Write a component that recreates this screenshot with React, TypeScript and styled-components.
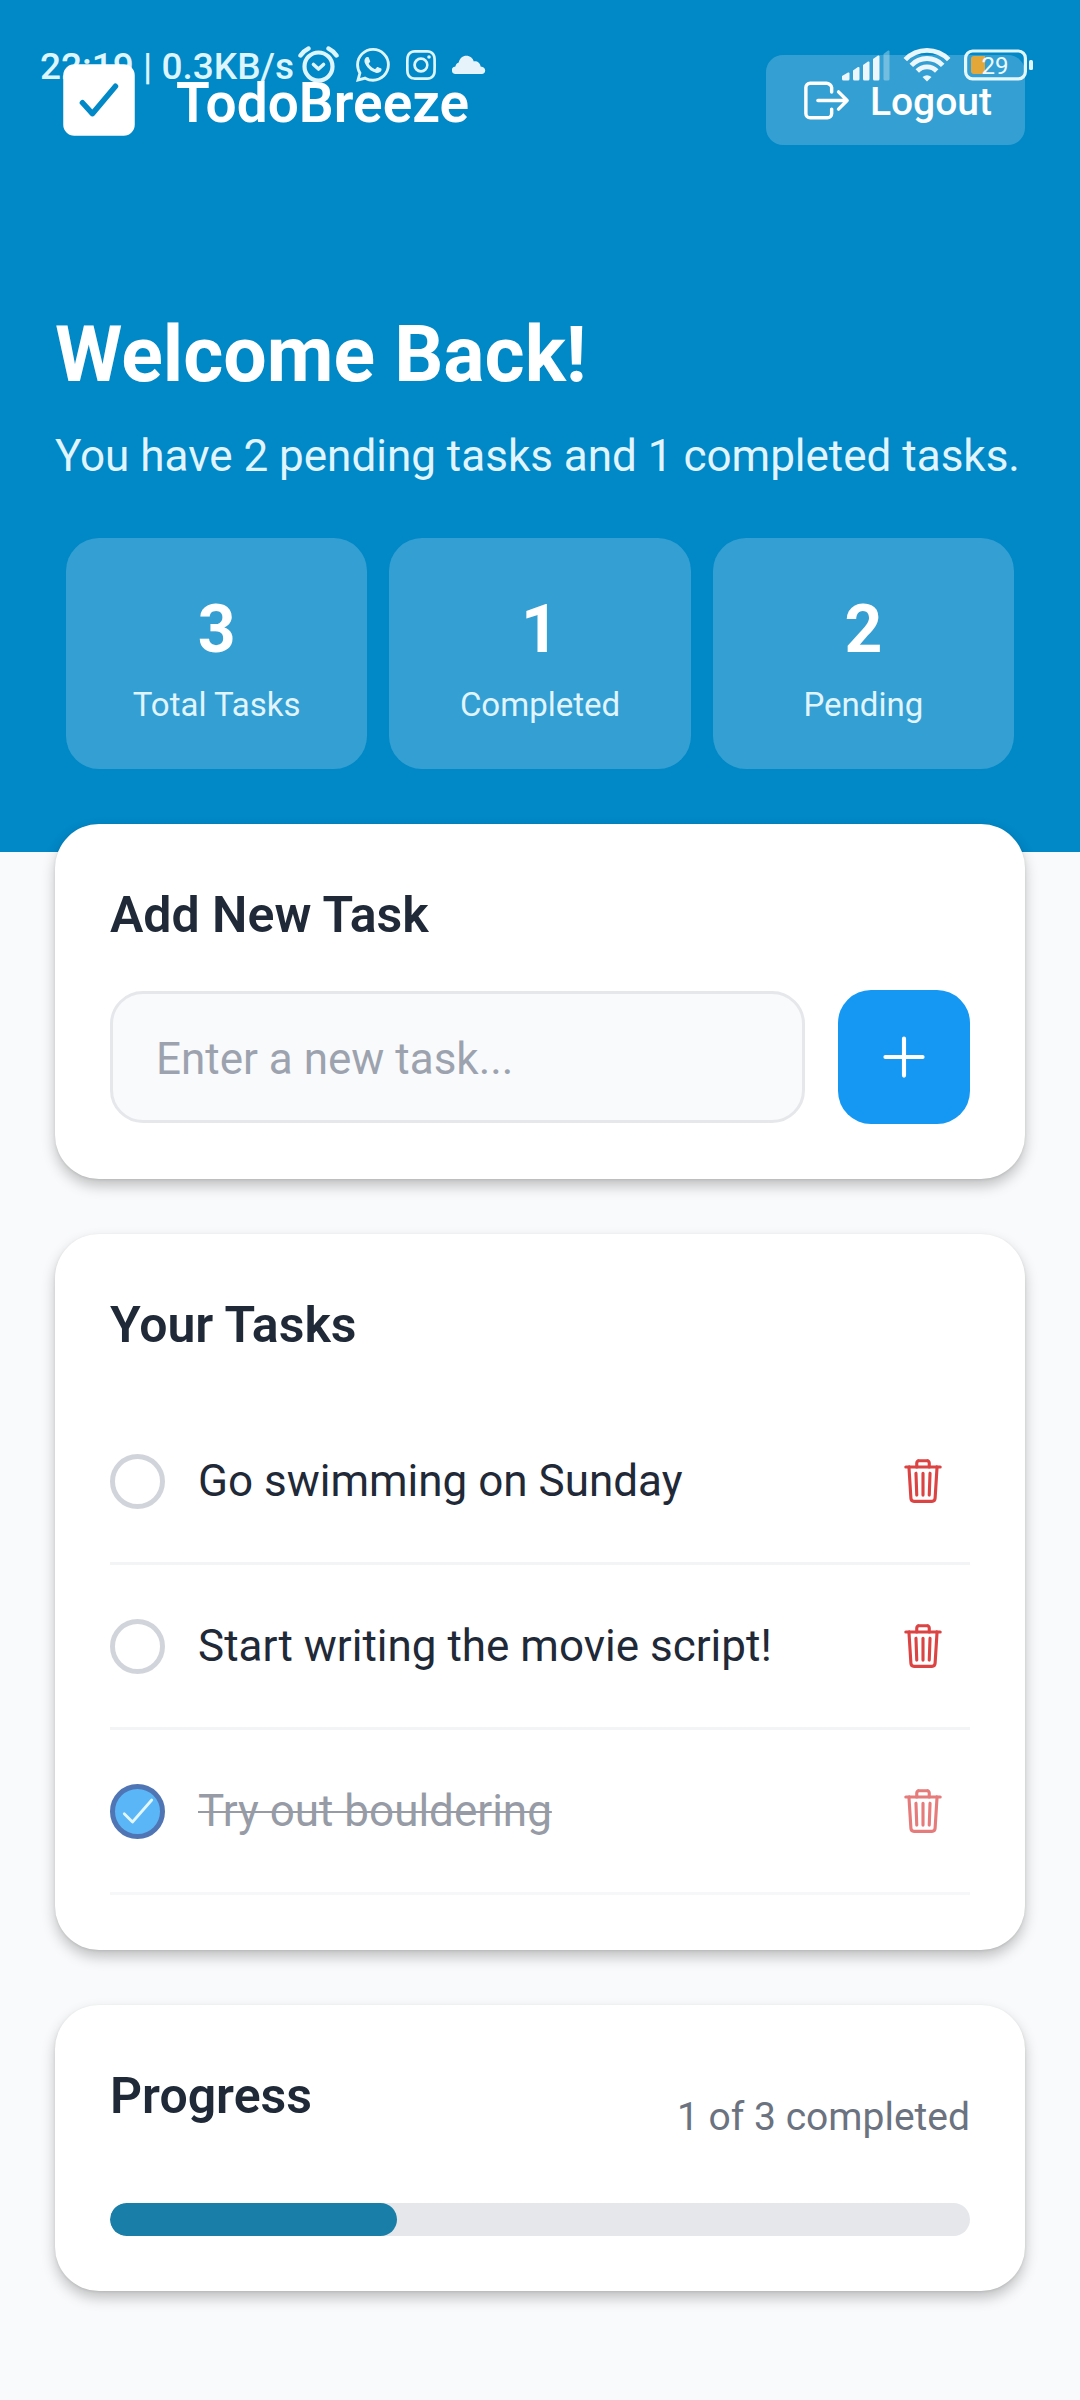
import React, { useState } from "react";
import styled, { createGlobalStyle } from "styled-components";
import {
  IoAddOutline,
  IoCheckbox,
  IoCheckmarkOutline,
  IoLogOutOutline,
  IoTrashOutline,
} from "react-icons/io5";
import { BsInstagram, BsWhatsapp } from "react-icons/bs";

const GlobalStyle = createGlobalStyle`
  *, *::before, *::after { box-sizing: border-box; }
  body {
    margin: 0;
    background: #f9fafb;
    color: #1f2937;
    font-family: Roboto, "Noto Sans", sans-serif;
  }
  h1, h2, p, ul, dl, dt, dd { margin: 0; padding: 0; }
  button, input { font: inherit; }
  svg { display: block; flex: none; }
`;

const Page = styled.div`
  position: relative;
  min-height: 100vh;
`;

const StatusBar = styled.div`
  position: absolute;
  z-index: 1;
  inset: 0 0 auto;
  height: 130px;
  padding: 0 46px 0 40px;
  display: flex;
  align-items: center;
  justify-content: space-between;
  color: #dcf5fe;
  pointer-events: none;
`;

const StatusGroup = styled.div<{ $gap: number }>`
  display: flex;
  align-items: center;
  gap: ${(p) => p.$gap}px;
`;

const StatusText = styled.span`
  padding-top: 3px;
  font-size: 37px;
  line-height: 48px;
  font-weight: 500;
  white-space: nowrap;
`;

const Header = styled.header`
  background: #0088c7;
  padding: 55px 55px 83px;
`;

const TopRow = styled.div`
  position: relative;
  z-index: 2;
  display: flex;
  align-items: center;
  justify-content: space-between;
`;

const Brand = styled.div`
  display: flex;
  align-items: center;
  gap: 33px;
  color: #fff;
`;

const BrandName = styled.span`
  padding-top: 5px;
  font-size: 55px;
  line-height: 78px;
  font-weight: 600;
`;

const LogoutButton = styled.button`
  display: flex;
  align-items: center;
  gap: 16px;
  height: 90px;
  padding: 0 33px;
  border: 0;
  border-radius: 17px;
  background: rgba(255, 255, 255, 0.2);
  color: #fff;
  font-size: 39px;
  line-height: 54px;
  font-weight: 500;
  cursor: pointer;
`;

const LogoutText = styled.span`
  padding-top: 3px;
`;

const Welcome = styled.h1`
  margin-top: 155px;
  color: #fff;
  font-size: 77px;
  line-height: 110px;
  font-weight: 700;
`;

const Summary = styled.p`
  margin-top: 15px;
  color: #e0f5ff;
  font-size: 44px;
  line-height: 63px;
`;

const Stats = styled.dl`
  margin: 50px 11px 0;
  display: grid;
  grid-template-columns: repeat(3, 1fr);
  gap: 22px;
`;

const StatCard = styled.div`
  display: flex;
  flex-direction: column-reverse;
  gap: 4px;
  padding: 45px 33px 41px;
  border-radius: 33px;
  background: rgba(255, 255, 255, 0.2);
  text-align: center;
`;

const StatValue = styled.dd`
  color: #fff;
  font-size: 66px;
  line-height: 94px;
  font-weight: 700;
`;

const StatLabel = styled.dt`
  color: #e0f5ff;
  font-size: 33px;
  line-height: 47px;
`;

const Content = styled.main`
  position: relative;
  margin-top: -28px;
  padding: 0 55px 55px;
  display: flex;
  flex-direction: column;
  gap: 55px;
`;

const Card = styled.section`
  padding: 55px;
  border-radius: 44px;
  background: #fff;
  box-shadow: 0 7px 14px rgba(0, 0, 0, 0.23), 0 1px 3px rgba(0, 0, 0, 0.09);
`;

const CardTitle = styled.h2`
  padding-bottom: 39px;
  font-size: 50px;
  line-height: 72px;
  font-weight: 600;
`;

const AddForm = styled.form`
  display: flex;
  align-items: center;
  gap: 33px;
`;

const TaskInput = styled.input`
  flex: 1;
  min-width: 0;
  height: 132px;
  padding: 3px 43px 0;
  border: 3px solid #e5e7eb;
  border-radius: 33px;
  background: #f9fafb;
  color: #1f2937;
  font-size: 44px;
  &::placeholder { color: #9ca3af; opacity: 1; }
`;

const AddButton = styled.button`
  flex: none;
  display: grid;
  place-items: center;
  width: 132px;
  height: 134px;
  padding: 0;
  border: 0;
  border-radius: 33px;
  background: #1598f3;
  color: #fff;
  cursor: pointer;
`;

const TaskList = styled.ul`
  list-style: none;
`;

const TaskRow = styled.li<{ $done: boolean }>`
  display: flex;
  align-items: center;
  justify-content: space-between;
  height: 165px;
  border-bottom: 3px solid #f3f4f6;
  opacity: ${(p) => (p.$done ? 0.7 : 1)};
`;

const TaskLabel = styled.label<{ $done: boolean }>`
  display: flex;
  align-items: center;
  gap: 33px;
  font-size: 44px;
  line-height: 63px;
  color: ${(p) => (p.$done ? "#6b7280" : "#1f2937")};
  cursor: pointer;
`;

const TaskText = styled.span<{ $done: boolean }>`
  text-decoration: ${(p) => (p.$done ? "line-through" : "none")};
  text-decoration-thickness: 2px;
`;

const CheckWrap = styled.span`
  display: grid;
  place-items: center;
  color: #d8f4ff;
  > * { grid-area: 1 / 1; }
  svg { z-index: 1; pointer-events: none; }
`;

const Checkbox = styled.input`
  appearance: none;
  width: 55px;
  height: 55px;
  margin: 0;
  border: 5px solid #d1d5db;
  border-radius: 50%;
  cursor: pointer;
  &:checked {
    border-color: #053b95;
    background: #1598f3;
  }
`;

const DeleteButton = styled.button`
  padding: 22px;
  border: 0;
  background: none;
  color: #dc4444;
  cursor: pointer;
`;

const ProgressHead = styled.div`
  display: flex;
  align-items: center;
  justify-content: space-between;
`;

const ProgressCount = styled.span`
  padding-top: 2px;
  color: #6b7280;
  font-size: 39px;
  line-height: 54px;
`;

const Track = styled.div`
  margin-top: 32px;
  height: 33px;
  border-radius: 17px;
  background: #e5e7eb;
  overflow: hidden;
`;

const Fill = styled.div`
  height: 100%;
  border-radius: 17px;
  background: #1a7fa8;
`;

const AlarmIcon = () => (
  <svg width="42" height="38" viewBox="0 0 42 38" fill="none" stroke="currentColor">
    <circle cx="20.5" cy="20.5" r="14" strokeWidth="4.2" />
    <path d="M2.5 9.5Q5.500 5 10.500 2.500M38.500 9.500Q35.500 5 30.500 2.500" strokeWidth="4.400" strokeLinecap="round" />
    <path d="M15.500 18.500L20.500 23L25.500 18.500" strokeWidth="3.600" strokeLinecap="round" strokeLinejoin="round" />
  </svg>
);

const CloudIcon = () => (
  <svg width="34" height="20" viewBox="0 0 34 20" fill="#e6f3fb">
    <path d="M4 19a3.800 3.800 0 0 1-.6-7.600C4 9 5.200 8 6.700 7.600 7.600 3.300 10.700.8 14.400.8c3.600 0 6.400 2.300 7.400 5.600 3.800-.4 6.400 1.800 6.800 5 2.900.3 4.600 1.900 4.600 4.200 0 2-1.400 3.400-3.400 3.400z" />
  </svg>
);

const SignalIcon = () => (
  <svg width="48" height="34" viewBox="0 0 48 34" fill="#e8f6fd">
    <path d="M0 28l6-3.500q1.500-.5 1.500 1V31q0 1.500-1.500 1.500H1.500Q0 32.500 0 31z" />
    <path d="M11 22.500l5-3.500q1.500-.5 1.500 1V31q0 1.500-1.500 1.500h-3.500Q11 32.500 11 31z" />
    <path d="M21 17l5-3.500q1.500-.5 1.500 1V31q0 1.500-1.500 1.500h-3.500Q21 32.500 21 31z" />
    <path d="M31 11l5-3.500q1.500-.5 1.500 1V31q0 1.500-1.500 1.500h-3.500Q31 32.500 31 31z" />
    <path opacity=".35" d="M41.500 6l4.500-3.500q1.500-.5 1.500 1V31q0 1.500-1.500 1.500h-3Q41.500 32.500 41.500 31z" />
  </svg>
);

const WifiIcon = () => (
  <svg width="48" height="34" viewBox="0 0 48 34" fill="none" stroke="#e8f6fd" strokeWidth="4.800">
    <path d="M2.300 11.700a30 30 0 0 1 43.400 0M8.300 17.300a21.500 21.500 0 0 1 31.400 0M14.300 23a13.500 13.500 0 0 1 19.400 0" />
    <path d="M24 33.500l-4.500-4.500q4.500-3.500 9 0z" fill="#e8f6fd" stroke="none" />
  </svg>
);

const BatteryIcon = () => (
  <svg width="70" height="32" viewBox="0 0 70 32">
    <path d="M10 7h11v18H10q-3 0-3-3V10q0-3 3-3z" fill="#dd9108" />
    <rect x="1.600" y="2" width="59.800" height="27.800" rx="7" fill="none" stroke="#dff6fe" strokeWidth="3.200" />
    <rect x="65" y="11" width="4" height="10" rx="1.500" fill="#dff6fe" />
    <text x="31" y="24.500" fill="#e8f8ff" fontSize="24" fontFamily="Roboto, sans-serif" textAnchor="middle">
      29
    </text>
  </svg>
);

type Task = { id: number; text: string; done: boolean };

const initialTasks: Task[] = [
  { id: 1, text: "Go swimming on Sunday", done: false },
  { id: 2, text: "Start writing the movie script!", done: false },
  { id: 3, text: "Try out bouldering", done: true },
];

export default function App() {
  const [tasks, setTasks] = useState<Task[]>(initialTasks);
  const [draft, setDraft] = useState("");

  const total = tasks.length;
  const completed = tasks.filter((t) => t.done).length;
  const pending = total - completed;

  const addTask = (e: React.FormEvent) => {
    e.preventDefault();
    const text = draft.trim();
    if (!text) return;
    setTasks([...tasks, { id: Date.now(), text, done: false }]);
    setDraft("");
  };
  const toggle = (id: number) =>
    setTasks(tasks.map((t) => (t.id === id ? { ...t, done: !t.done } : t)));
  const remove = (id: number) => setTasks(tasks.filter((t) => t.id !== id));

  const stats = [
    { label: "Total Tasks", value: total },
    { label: "Completed", value: completed },
    { label: "Pending", value: pending },
  ];

  return (
    <Page>
      <GlobalStyle />
      <StatusBar>
        <StatusGroup $gap={4}>
          <StatusText>22:19 | 0.3KB/s</StatusText>
          <StatusGroup $gap={16}>
            <AlarmIcon />
            <BsWhatsapp size={34} />
            <BsInstagram size={30} />
            <CloudIcon />
          </StatusGroup>
        </StatusGroup>
        <StatusGroup $gap={13}>
          <SignalIcon />
          <WifiIcon />
          <BatteryIcon />
        </StatusGroup>
      </StatusBar>

      <Header>
        <TopRow>
          <Brand>
            <IoCheckbox size={88} />
            <BrandName>TodoBreeze</BrandName>
          </Brand>
          <LogoutButton type="button">
            <IoLogOutOutline size={55} />
            <LogoutText>Logout</LogoutText>
          </LogoutButton>
        </TopRow>
        <Welcome>Welcome Back!</Welcome>
        <Summary>
          You have {pending} pending tasks and {completed} completed tasks.
        </Summary>
        <Stats>
          {stats.map((s) => (
            <StatCard key={s.label}>
              <StatLabel>{s.label}</StatLabel>
              <StatValue>{s.value}</StatValue>
            </StatCard>
          ))}
        </Stats>
      </Header>

      <Content>
        <Card>
          <CardTitle>Add New Task</CardTitle>
          <AddForm onSubmit={addTask}>
            <TaskInput
              aria-label="New task"
              placeholder="Enter a new task..."
              value={draft}
              onChange={(e) => setDraft(e.target.value)}
            />
            <AddButton type="submit" aria-label="Add task">
              <IoAddOutline size={66} />
            </AddButton>
          </AddForm>
        </Card>

        <Card>
          <CardTitle>Your Tasks</CardTitle>
          <TaskList>
            {tasks.map((t) => (
              <TaskRow key={t.id} $done={t.done}>
                <TaskLabel $done={t.done}>
                  <CheckWrap>
                    <Checkbox type="checkbox" checked={t.done} onChange={() => toggle(t.id)} />
                    {t.done && <IoCheckmarkOutline size={44} />}
                  </CheckWrap>
                  <TaskText $done={t.done}>{t.text}</TaskText>
                </TaskLabel>
                <DeleteButton type="button" aria-label={`Delete ${t.text}`} onClick={() => remove(t.id)}>
                  <IoTrashOutline size={50} />
                </DeleteButton>
              </TaskRow>
            ))}
          </TaskList>
        </Card>

        <Card>
          <ProgressHead>
            <CardTitle>Progress</CardTitle>
            <ProgressCount>
              {completed} of {total} completed
            </ProgressCount>
          </ProgressHead>
          <Track role="progressbar" aria-label="Completed tasks" aria-valuemin={0} aria-valuemax={total} aria-valuenow={completed}>
            <Fill style={{ width: `${total ? (completed / total) * 100 : 0}%` }} />
          </Track>
        </Card>
      </Content>
    </Page>
  );
}
